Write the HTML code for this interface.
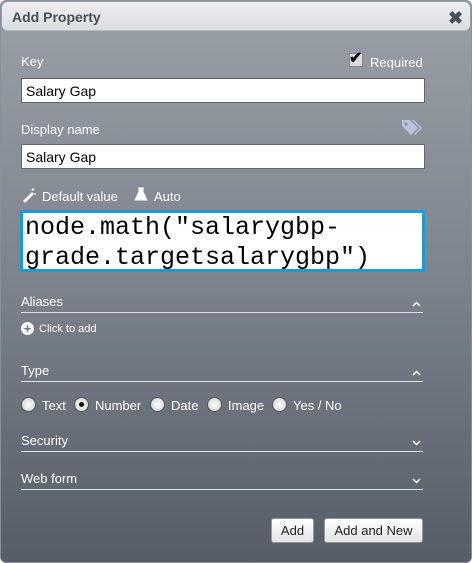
<!DOCTYPE html>
<html><head><style>
*{margin:0;padding:0;box-sizing:border-box}
body{width:472px;height:563px;background:#fff;font-family:"Liberation Sans",Arial,sans-serif;position:relative;overflow:hidden}
.dlg{position:absolute;left:0;top:0;width:472px;height:563px;border-radius:6px;background:linear-gradient(#9aa0a8 0px,#7c838c 280px,#555d67 563px);border:1px solid #8a9099}
.title{position:absolute;left:1px;top:1px;width:468px;height:29px;background:linear-gradient(#eceef0,#dcdfe2);border-radius:6px;border-bottom:1px solid #b8bcc1}
.title span{position:absolute;left:10px;top:7px;font-weight:bold;font-size:14px;color:#4a4f55}
.x{position:absolute;left:446px;top:8px;font-size:18px;font-weight:bold;color:#4b5158;line-height:16px}
.lbl{position:absolute;color:#fff;font-size:13px;white-space:nowrap}
.inp{position:absolute;left:20px;width:404px;height:25px;background:#fff;border:1px solid #666;font-size:14px;padding:4px 4px;color:#000}
.code{position:absolute;left:19px;top:209px;width:405px;height:62px;background:#fff;border:3px solid #1a9ad6;font-family:"Liberation Mono",monospace;font-size:25px;line-height:30px;padding:0 2px;color:#000;white-space:nowrap;overflow:hidden}
.sec{position:absolute;left:20px;width:402px;border-bottom:1px solid #dfe2e6;color:#fff;font-size:13px;height:18px;line-height:13px}
.car{position:absolute;right:2px;top:6px}
.radio{position:absolute;width:15px;height:15px;border-radius:50%;background:radial-gradient(#fff,#ccc);border:1px solid #555}
.radio.on::after{content:"";position:absolute;left:4px;top:4px;width:5px;height:5px;border-radius:50%;background:#111}
.btn{position:absolute;top:517px;height:25px;background:linear-gradient(#fff,#e4e4e4);border:1px solid #999;border-radius:3px;font-size:13px;text-align:center;line-height:23px;color:#222}
</style></head><body>
<div class="dlg">
<div class="title"><span>Add Property</span><div class="x">✖</div></div>
<div class="lbl" style="left:20px;top:53px">Key</div>
<div style="position:absolute;left:348px;top:52px;width:14px;height:14px;background:#ddd;border:1px solid #888"></div>
<div style="position:absolute;left:348px;top:47px;font-size:16px;font-weight:bold;color:#111">✔</div>
<div class="lbl" style="left:369px;top:54px">Required</div>
<div class="inp" style="top:77px">Salary Gap</div>
<div class="lbl" style="left:20px;top:121px">Display name</div>
<svg style="position:absolute;left:400px;top:118px" width="22" height="18" viewBox="0 0 22 18"><path d="M1 1h8l8 8-7 7-9-9z" fill="#b7c3dc"/><circle cx="5" cy="5" r="1.5" fill="#8a9099"/><path d="M11 1h2l8 8-7 7-1-1 6-6z" fill="#b7c3dc"/></svg>
<div class="inp" style="top:143px">Salary Gap</div>
<svg style="position:absolute;left:20px;top:186px" width="16" height="16" viewBox="0 0 16 16"><path d="M2 14l9-9 2 2-9 9z" fill="#fff"/><path d="M12 1v3M10 2.5h4M14 6v2" stroke="#fff" stroke-width="1"/></svg>
<div class="lbl" style="left:41px;top:188px">Default value</div>
<svg style="position:absolute;left:133px;top:186px" width="14" height="14" viewBox="0 0 14 14"><path d="M4 1h6M5 1v4L1 13h12L9 5V1" fill="#fff" stroke="#fff"/></svg>
<div class="lbl" style="left:153px;top:188px">Auto</div>
<div class="code">node.math("salarygbp-<br>grade.targetsalarygbp")</div>
<div class="sec" style="top:294px">Aliases<svg class="car" width="9" height="6" viewBox="0 0 9 6"><path d="M1 5l3.5-3.5L8 5" stroke="#fff" stroke-width="1.5" fill="none"/></svg></div>
<div style="position:absolute;left:20px;top:321px;width:13px;height:13px;border-radius:50%;background:#fff;color:#6a717a;font-size:13px;line-height:13px;text-align:center;font-weight:bold">+</div>
<div class="lbl" style="left:38px;top:322px;font-size:11px">Click to add</div>
<div class="sec" style="top:363px">Type<svg class="car" width="9" height="6" viewBox="0 0 9 6"><path d="M1 5l3.5-3.5L8 5" stroke="#fff" stroke-width="1.5" fill="none"/></svg></div>
<span class="radio" style="left:20px;top:396px"></span><div class="lbl" style="left:41px;top:397px">Text</div>
<span class="radio on" style="left:73px;top:396px"></span><div class="lbl" style="left:94px;top:397px">Number</div>
<span class="radio" style="left:149px;top:396px"></span><div class="lbl" style="left:170px;top:397px">Date</div>
<span class="radio" style="left:206px;top:396px"></span><div class="lbl" style="left:227px;top:397px">Image</div>
<span class="radio" style="left:271px;top:396px"></span><div class="lbl" style="left:292px;top:397px">Yes / No</div>
<div class="sec" style="top:433px">Security<svg class="car" width="9" height="6" viewBox="0 0 9 6"><path d="M1 1l3.5 3.5L8 1" stroke="#fff" stroke-width="1.5" fill="none"/></svg></div>
<div class="sec" style="top:471px">Web form<svg class="car" width="9" height="6" viewBox="0 0 9 6"><path d="M1 1l3.5 3.5L8 1" stroke="#fff" stroke-width="1.5" fill="none"/></svg></div>
<div class="btn" style="left:270px;width:43px">Add</div>
<div class="btn" style="left:323px;width:99px">Add and New</div>
</div>
</body></html>
